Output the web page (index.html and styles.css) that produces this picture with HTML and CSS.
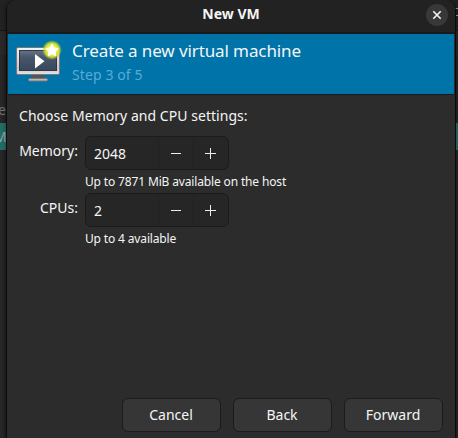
FILE: index.html
```html
<!DOCTYPE html>
<html lang="en">
<head>
    <meta charset="UTF-8">
    <meta name="viewport" content="width=device-width, initial-scale=1.0">
    <title>New VM</title>
    <link rel="stylesheet" href="styles.css">
</head>
<body>

<div class="backdrop">
    <div class="backdrop-bar"><span class="menu-lines"></span></div>
    <div class="backdrop-tools"></div>
    <div class="backdrop-label">e</div>
    <div class="backdrop-row">M</div>
</div>

<div class="window">
    <div class="titlebar">
        <span class="title">New VM</span>
        <button class="close-btn" aria-label="Close">
            <svg width="22" height="22" viewBox="0 0 22 22"><path d="M7.3 7.3l7.4 7.4M14.7 7.3l-7.4 7.4" stroke="#f4f4f4" stroke-width="1.6"/></svg>
        </button>
    </div>

    <div class="banner">
        <svg class="vm-icon" width="48" height="48" viewBox="0 0 48 48">
            <defs>
                <linearGradient id="frame" x1="0" y1="0" x2="0" y2="1">
                    <stop offset="0" stop-color="#f4f4f4"/>
                    <stop offset="0.8" stop-color="#c9c5c9"/>
                    <stop offset="1" stop-color="#e8e6e8"/>
                </linearGradient>
                <linearGradient id="screen" x1="0" y1="0" x2="0" y2="1">
                    <stop offset="0" stop-color="#657389"/>
                    <stop offset="0.35" stop-color="#48566a"/>
                    <stop offset="1" stop-color="#39465b"/>
                </linearGradient>
                <radialGradient id="glow">
                    <stop offset="0.45" stop-color="#f0f43c"/>
                    <stop offset="0.72" stop-color="#d4e02a" stop-opacity="0.9"/>
                    <stop offset="1" stop-color="#9bc53d" stop-opacity="0"/>
                </radialGradient>
            </defs>
            <rect x="18" y="34" width="12" height="5" fill="#555"/>
            <rect x="14.5" y="38.5" width="19" height="2.5" rx="1" fill="#b9b9b9" stroke="#777"/>
            <rect x="2.5" y="7.5" width="43" height="27" rx="1.5" fill="url(#frame)" stroke="#77787c"/>
            <rect x="5.5" y="10.5" width="37" height="20" fill="url(#screen)" stroke="#2f3949"/>
            <path d="M21 14v14.5l9.5-7.25z" fill="#fff"/>
            <circle cx="38" cy="10" r="10" fill="url(#glow)"/>
            <path d="M38 4l1.9 3.9 4.3.6-3.1 3 .7 4.3-3.8-2-3.8 2 .7-4.3-3.1-3 4.3-.6z" fill="#fff" stroke="#fff" stroke-width="1" stroke-linejoin="round"/>
        </svg>
        <div class="banner-text">
            <h1>Create a new virtual machine</h1>
            <p>Step 3 of 5</p>
        </div>
    </div>

    <div class="content">
        <p class="intro">Choose Memory and CPU settings:</p>
        <div class="form">
            <label for="memory">Memory:</label>
            <div class="field">
                <div class="spin">
                    <input type="text" id="memory" value="2048">
                    <button class="minus" aria-label="Decrease memory"></button>
                    <button class="plus" aria-label="Increase memory"></button>
                </div>
                <p class="hint">Up to 7871 MiB available on the host</p>
            </div>
            <label for="cpus">CPUs:</label>
            <div class="field">
                <div class="spin">
                    <input type="text" id="cpus" value="2">
                    <button class="minus" aria-label="Decrease CPUs"></button>
                    <button class="plus" aria-label="Increase CPUs"></button>
                </div>
                <p class="hint">Up to 4 available</p>
            </div>
        </div>
    </div>

    <div class="actions">
        <button>Cancel</button>
        <button>Back</button>
        <button>Forward</button>
    </div>
</div>

</body>
</html>
```

FILE: styles.css
```css
* {
    box-sizing: border-box;
}

body {
    margin: 0;
    height: 438px;
    overflow: hidden;
    background: #252525;
    color: #f5f5f5;
    font-family: "Noto Sans", "Open Sans", sans-serif;
    font-size: 14px;
}

h1, p {
    margin: 0;
    font-weight: normal;
}

button, input {
    padding: 0;
    border: none;
    background: none;
    color: inherit;
    font: inherit;
}

/* Main window showing behind the dialog */
.backdrop {
    position: absolute;
    inset: 0;
    background: linear-gradient(90deg, #292929, #202020 7px, #202020 455px, #272727);
    color: #747474;
    line-height: 27px;
}

.backdrop-bar {
    height: 31px;
    padding-top: 8px;
    border-bottom: 1px solid #161616;
    background: #222;
}

.menu-lines {
    display: block;
    width: 3px;
    height: 8px;
    margin-left: auto;
    border: solid #999;
    border-width: 1px 0;
}

.backdrop-tools {
    height: 24px;
    background: #292929;
}

.backdrop-label {
    height: 68px;
    padding-top: 41px;
    margin-left: -2px;
}

.backdrop-row {
    height: 27px;
    background: #246c68;
    color: #8bada9;
    text-indent: -6px;
}

/* Dialog */
.window {
    position: relative;
    display: flex;
    flex-direction: column;
    width: 450px;
    height: 438px;
    margin-left: 6px;
    border: solid #0b0b0b;
    border-width: 0 1px;
    border-radius: 10px 10px 0 0;
    background: #2c2c2c;
    box-shadow: 0 0 4px rgba(0, 0, 0, 0.4);
}

.titlebar {
    display: grid;
    grid-template-columns: 1fr auto 1fr;
    align-items: center;
    height: 34px;
    padding: 0 7px 6px 0;
    border-bottom: 2px solid #191919;
    border-radius: 9px 9px 0 0;
    background: #222;
}

.title {
    grid-column: 2;
    padding: 1px 0 0 7px;
    font-size: 14px;
    font-weight: bold;
}

.close-btn {
    width: 22px;
    height: 22px;
    margin-top: 3px;
    justify-self: end;
    border-radius: 50%;
    background: #383838;
}

.close-btn svg {
    display: block;
}

.banner {
    display: flex;
    height: 61px;
    margin: 0 1px;
    padding: 6px 6px 0;
    border-bottom: 1px solid #1b1b1b;
    background: #0073a9;
}

.banner-text {
    padding: 0 0 0 10px;
}

.banner h1 {
    font-size: 17px;
    letter-spacing: -0.1px;
    line-height: 21px;
    white-space: nowrap;
}

.banner p {
    margin-top: 4px;
    color: #59abd8;
    letter-spacing: 0.1px;
    line-height: 20px;
}

.content {
    flex: 1;
    padding: 11px 12px;
}

.intro {
    letter-spacing: 0.04px;
    line-height: 20px;
}

.form {
    display: grid;
    grid-template-columns: 59px auto;
    column-gap: 7px;
    row-gap: 4px;
    margin-top: 10px;
}

.form label {
    padding-top: 5px;
    line-height: 20px;
    text-align: right;
    white-space: nowrap;
}

.spin {
    display: flex;
    width: 144px;
    height: 34px;
    border: 1px solid #1b1b1b;
    border-radius: 6px;
    background: #262626;
}

.spin input {
    width: 72px;
    padding-left: 8px;
    outline: none;
}

.spin button {
    flex: 1;
    border-left: 1px solid #212121;
    background: linear-gradient(#ededed, #ededed) 12px 16px / 10px 1px no-repeat;
}

.spin .plus {
    background: linear-gradient(#ededed, #ededed) 11px 16px / 11px 1px no-repeat,
        linear-gradient(#ededed, #ededed) 16px 11px / 1px 11px no-repeat;
}

.hint {
    margin-top: 4px;
    font-size: 12px;
    letter-spacing: -0.15px;
    line-height: 15px;
}

.actions {
    display: flex;
    justify-content: flex-end;
    gap: 12px;
    padding: 0 12px 6px 0;
}

.actions button {
    width: 99px;
    height: 34px;
    padding: 0 1px 1px 0;
    border: 1px solid #1b1b1b;
    border-radius: 6px;
    background: #363636;
}
```
